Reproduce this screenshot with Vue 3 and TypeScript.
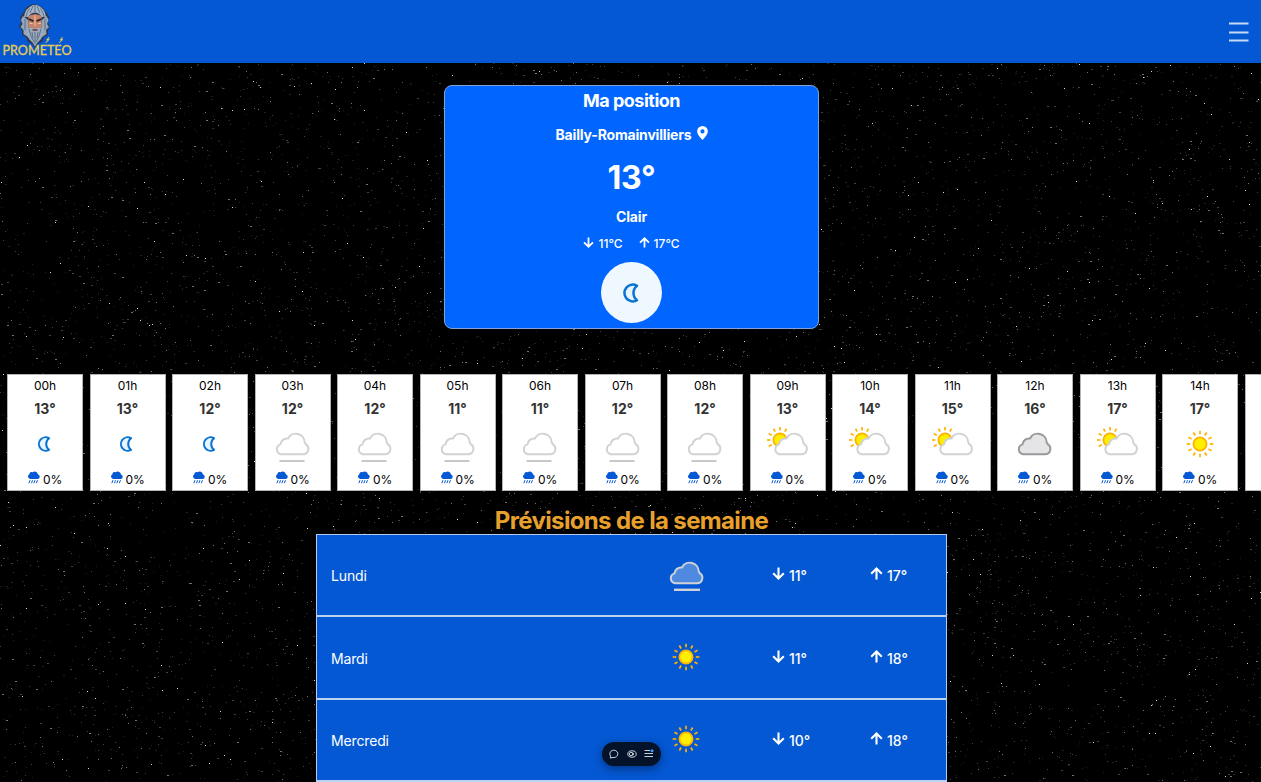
<script setup lang="ts">
type Sky = 'moon' | 'fog' | 'partly' | 'cloud' | 'sun'

interface Hour {
  label: string
  temp: number
  sky: Sky
}

interface Day {
  name: string
  low: number
  high: number
  sky: Sky
}

const hourTemps = [13, 13, 12, 12, 12, 11, 11, 12, 12, 13, 14, 15, 16, 17, 17]
const hourSkies: Sky[] = [
  'moon', 'moon', 'moon', 'fog', 'fog', 'fog', 'fog', 'fog', 'fog',
  'partly', 'partly', 'partly', 'cloud', 'partly', 'sun',
]
const hours: Hour[] = hourTemps.map((temp, i) => ({
  label: `${String(i).padStart(2, '0')}h`,
  temp,
  sky: hourSkies[i],
}))

const days: Day[] = [
  { name: 'Lundi', low: 11, high: 17, sky: 'fog' },
  { name: 'Mardi', low: 11, high: 18, sky: 'sun' },
  { name: 'Mercredi', low: 10, high: 18, sky: 'sun' },
]

const rays = Array.from({ length: 12 }, (_, i) => i * 30)
const partlyRays = [150, 180, 210, 240, 270, 300]

const cloudPath =
  'M7 28.300 H29 A5.400 5.400 0 0 0 31.600 18.200 Q31.600 17.200 30.700 16.500 A8.800 8.800 0 0 0 14 12.600 A6.400 6.400 0 0 0 6.500 18.400 A5.100 5.100 0 0 0 7 28.300 Z'
const moonPath = 'M12 2.200 A6.700 6.700 0 1 0 12 13.800 A7.400 7.400 0 0 1 12 2.200 Z'

// Deterministic star field: one path per brightness level.
let seed = 20231
function random(): number {
  seed = (seed * 1664525 + 1013904223) % 4294967296
  return seed / 4294967296
}
const starLevels = [
  { opacity: 0.13, count: 4600 },
  { opacity: 0.26, count: 3300 },
  { opacity: 0.45, count: 1500 },
  { opacity: 0.85, count: 360 },
].map(({ opacity, count }) => {
  let d = ''
  for (let i = 0; i < count; i++) {
    const x = Math.floor(random() * 1261)
    const y = Math.floor(random() * 720)
    const w = opacity < 0.8 && random() > 0.8 ? 2 : 1
    d += `M${x} ${y}h${w}v1h-${w}z`
  }
  return { opacity, d }
})
</script>

<template>
  <div class="page">
    <header class="topbar">
      <svg class="logo" width="76" height="62" viewBox="0 0 76 62">
        <path d="M34 4 Q26 5 23 13 L20 17 L21 22 L19 27 L22 30 L22 35 L26 37 L28 42 L31 43 L35 48 L39 43 L42 42 L44 37 L48 35 L48 30 L50 27 L48 22 L49.500 17 L46 12 Q42 5 34 4Z" fill="#2b3853" />
        <path d="M33 5 Q25 8 24 17 L28.500 17 Q30 13 35 12.500 Q40 13 41.500 17 L46 17 Q45 8 37 5Z" fill="#a3b3c5" />
        <path d="M23 16 L21 20 L22.500 24 L20.500 27 L23.500 30 L23.500 34 L28 37 L28 20Z M46.500 16 L48.500 20 L47 24 L49 27 L46 30 L46.500 34 L42 37 L42 20Z" fill="#95a6ba" />
        <path d="M28.500 16 Q35 12.500 41.500 16 L42 27 Q35 31 28 27Z" fill="#c4836b" />
        <path d="M28.500 19 L33.500 21.200 M41.500 19 L36.500 21.200" stroke="#2a2432" stroke-width="1.900" />
        <path d="M29.500 23.500H32.500M38 23.500H41" stroke="#f0c5a5" stroke-width="1.200" />
        <path d="M35 15 V26" stroke="#e8a283" stroke-width="1.800" />
        <path d="M27 27.500 Q31 27 35 28.500 Q39 27 43 27.500 L43.500 34 L41 39 L37.500 42.500 L35 46.500 L32.500 42.500 L29 39 L26.500 34Z" fill="#9aabbe" />
        <path d="M29 29 L31 36 L34 42 M35 32 V44 M41 29 L39 36 L36 42 M29.500 8.500 Q26.500 12 26 17 M33 6 L30 13 M35 5V12 M37 6 L40 13 M40.500 8.500 Q43.500 12 44 17 M25 19 V30 M45 19 V30 M32 32 L33 38 M38 32 L37 38" stroke="#45536e" stroke-width=".7" fill="none" />
        <path d="M32.500 30 H37.500" stroke="#6c3c40" stroke-width="1.600" />
        <path d="M49 37 L46.500 40 H48 L45.500 43 L49.500 39.500 H48Z M62.500 37 L60 40 H61.500 L59 43 L63 39.500 H61.500Z" fill="#e8d15a" stroke="#e8d15a" stroke-width=".5" />
        <text x="2.500" y="54.700" textLength="69" lengthAdjust="spacingAndGlyphs" class="logo-text">PROMETEO</text>
      </svg>
      <svg class="burger" width="20" height="20" viewBox="0 0 20 20">
        <path d="M0 1.500H19.500M0 10.500H19.500M0 18.500H19.500" stroke="#c4d9f6" stroke-width="1.900" />
      </svg>
    </header>

    <main class="sky">
      <svg class="stars" width="1261" height="719" viewBox="0 0 1261 719" shape-rendering="crispEdges">
        <path v-for="level in starLevels" :key="level.opacity" :d="level.d" fill="#fff" :fill-opacity="level.opacity" />
      </svg>

      <section class="current">
        <h1>Ma position</h1>
        <div class="place">
          <span>Bailly-Romainvilliers</span>
          <svg width="11" height="14" viewBox="0 0 11 14">
            <path fill-rule="evenodd" d="M5.500 0A5.400 5.400 0 0 0 .1 5.400C.1 8 3 11.200 5.500 14 8 11.200 10.900 8 10.900 5.400A5.400 5.400 0 0 0 5.500 0ZM5.500 3.300A2.100 2.100 0 1 1 5.500 7.500 2.100 2.100 0 0 1 5.500 3.300Z" fill="#fff" />
          </svg>
        </div>
        <div class="now">13°</div>
        <div class="condition">Clair</div>
        <div class="range">
          <svg class="arrow" width="11" height="11" viewBox="0 0 13 13"><path d="M6.500 .5V11M1.200 6.300L6.500 11.500 11.800 6.300" /></svg>
          <span>11°C</span>
          <svg class="arrow second" width="11" height="11" viewBox="0 0 13 13"><path d="M6.500 12.500V2M1.200 6.700L6.500 1.500 11.800 6.700" /></svg>
          <span>17°C</span>
        </div>
        <div class="badge">
          <svg width="17.500" height="20" viewBox="0 0 14 16"><path :d="moonPath" class="moon" /></svg>
        </div>
      </section>

      <section class="hours">
        <article v-for="hour in hours" :key="hour.label" class="hour">
          <span class="hour-label">{{ hour.label }}</span>
          <strong class="hour-temp">{{ hour.temp }}°</strong>
          <div class="hour-icon">
            <svg v-if="hour.sky === 'moon'" class="moon-icon" width="14" height="16" viewBox="0 0 14 16"><path :d="moonPath" class="moon" /></svg>
            <svg v-else-if="hour.sky === 'sun'" width="28" height="28" viewBox="-14 -14 28 28">
              <circle r="6.600" class="sun" />
              <path v-for="a in rays" :key="a" d="M9.800 0H13.300" class="ray" :transform="`rotate(${a})`" />
            </svg>
            <svg v-else-if="hour.sky === 'partly'" class="partly-icon" width="44" height="36" viewBox="0 0 44 36">
              <g transform="translate(15 14)">
                <circle r="6.600" class="sun" />
                <path v-for="a in partlyRays" :key="a" d="M9.600 0H13" class="ray" :transform="`rotate(${a})`" />
              </g>
              <path :d="cloudPath" class="cloud white" transform="translate(7.500 0)" />
            </svg>
            <svg v-else class="cloud-icon" width="38" height="36" viewBox="0 0 38 36">
              <path :d="cloudPath" class="cloud" :class="hour.sky === 'cloud' ? 'grey' : 'white'" />
              <path v-if="hour.sky === 'fog'" d="M5.500 35H30.500" class="fogline" />
            </svg>
          </div>
          <div class="rain">
            <svg width="12" height="13" viewBox="0 0 12 13">
              <path d="M2.200 8A2.500 2.500 0 0 1 1.200 3.400 2.700 2.700 0 0 1 4.600 1.300 3.400 3.400 0 0 1 10 3.400 2.400 2.400 0 0 1 10 8Z" fill="#0458d3" />
              <path d="M2 9.200L.8 12.200M4.500 9.200L3.500 12.200M7 9.200L5.800 12.200M9.500 9.200L8.300 12.200" stroke="#0458d3" stroke-width="1" />
            </svg>
            <span>0%</span>
          </div>
        </article>
        <article class="hour"></article>
      </section>

      <h2>Prévisions de la semaine</h2>

      <section class="week">
        <div v-for="day in days" :key="day.name" class="day">
          <span class="day-name">{{ day.name }}</span>
          <div class="day-icon">
            <svg v-if="day.sky === 'sun'" class="day-sun" width="28" height="28" viewBox="-14 -14 28 28">
              <circle r="6.600" class="sun" />
              <path v-for="a in rays" :key="a" d="M9.800 0H13.300" class="ray" :transform="`rotate(${a})`" />
            </svg>
            <svg v-else class="day-fog" width="38" height="36" viewBox="0 0 38 36">
              <path :d="cloudPath" class="cloud tint" />
              <path d="M6 34.800H32" class="fogline light" />
            </svg>
          </div>
          <div class="day-temp">
            <svg class="arrow" width="13" height="13" viewBox="0 0 13 13"><path d="M6.500 .5V11M1.200 6.300L6.500 11.500 11.800 6.300" /></svg>
            <span>{{ day.low }}°</span>
          </div>
          <div class="day-temp">
            <svg class="arrow" width="13" height="13" viewBox="0 0 13 13"><path d="M6.500 12.500V2M1.200 6.700L6.500 1.500 11.800 6.700" /></svg>
            <span>{{ day.high }}°</span>
          </div>
        </div>
      </section>
    </main>

    <div class="toolbar">
      <svg width="10" height="10" viewBox="0 0 10 10"><path d="M1.200 9L1.700 7.200A4 3.700 0 1 1 4 8.500Z" /></svg>
      <svg width="10" height="10" viewBox="0 0 10 10"><ellipse cx="5" cy="5" rx="4.200" ry="3.200" /><circle cx="4" cy="5" r="1.700" /><path d="M5.800 3.500Q7.300 5 5.800 6.500" /></svg>
      <svg width="10" height="10" viewBox="0 0 10 10"><path d="M.5 1.500H6M.5 4.500H9M.5 7.500H9" /><circle cx="8" cy="1.700" r="1.500" class="dot" /></svg>
    </div>
  </div>
</template>

<style>
body {
  background: #000;
  overflow: hidden;
}
</style>

<style scoped>
.page {
  position: relative;
  width: 1261px;
  height: 782px;
  overflow: hidden;
  background: #000;
  color: #fff;
  font-family: Inter, "Liberation Sans", sans-serif;
}
svg {
  display: block;
  flex: none;
}
.topbar {
  height: 63px;
  background: #0458d3;
  display: flex;
  justify-content: space-between;
}
.logo-text {
  font: 400 13.5px Lato, sans-serif;
  fill: #e6cc55;
  stroke: #e6cc55;
  stroke-width: 0.35;
}
.burger {
  margin: 22px 12px 0 0;
}
.sky {
  position: relative;
  height: 719px;
  display: flex;
  flex-direction: column;
  align-items: center;
}
.stars {
  position: absolute;
  inset: 0;
}
.current {
  position: relative;
  box-sizing: border-box;
  flex: none;
  width: 375px;
  height: 244px;
  margin: 22px 0 0 2px;
  border: 1px solid #7fa3d8;
  border-radius: 8px;
  background: #0066ff;
  display: flex;
  flex-direction: column;
  align-items: center;
}
h1 {
  margin: 4px 0 0;
  font-size: 18px;
  line-height: 22px;
  font-weight: 700;
  letter-spacing: -0.5px;
}
.place {
  margin-top: 13px;
  height: 20px;
  display: flex;
  gap: 5px;
  font-size: 14px;
  line-height: 20px;
  font-weight: 700;
  letter-spacing: -0.17px;
}
.place svg {
  margin-top: 1px;
}
.now {
  margin-top: 13px;
  font-size: 32px;
  line-height: 40px;
  font-weight: 700;
  letter-spacing: -0.3px;
}
.condition {
  margin-top: 9px;
  font-size: 14px;
  line-height: 20px;
  font-weight: 700;
  letter-spacing: -0.2px;
}
.range {
  margin-top: 8px;
  height: 18px;
  display: flex;
  gap: 4px;
  font-size: 12px;
  line-height: 18px;
  font-weight: 500;
}
.range svg {
  margin-top: 2px;
}
.range .second {
  margin-left: 12px;
}
.arrow path {
  fill: none;
  stroke: #fff;
  stroke-width: 2.1;
}
.badge {
  margin-top: 9px;
  width: 61px;
  height: 61px;
  border-radius: 50%;
  background: #f0f8ff;
  display: flex;
  align-items: center;
  justify-content: center;
}
.badge svg {
  margin-right: 2px;
}
.moon {
  fill: #e9f5fb;
  stroke: #0a74d4;
  stroke-width: 2;
  stroke-linejoin: round;
}
.hours {
  position: relative;
  flex: none;
  align-self: flex-start;
  margin: 45px 0 0 7px;
  display: flex;
  gap: 6.5px;
}
.hour {
  box-sizing: border-box;
  flex: none;
  width: 76px;
  height: 117px;
  border: 1px solid #b4b4b4;
  background: #fff;
  color: #000;
  display: flex;
  flex-direction: column;
  align-items: center;
}
.hour-label {
  margin-top: 2px;
  font-size: 12px;
  line-height: 18px;
}
.hour-temp {
  margin-top: 4px;
  font-size: 14px;
  line-height: 20px;
  color: #333;
}
.hour-icon {
  height: 46px;
  margin-top: 2px;
  display: flex;
  align-items: center;
  justify-content: center;
}
.moon-icon {
  margin-right: 3px;
}
.partly-icon {
  margin-right: 2px;
}
.sun {
  fill: #ffee00;
  stroke: #ffb300;
  stroke-width: 1.8;
}
.ray {
  stroke: #ffb300;
  stroke-width: 1.7;
}
.cloud {
  stroke-width: 2;
  stroke-linejoin: round;
}
.white {
  fill: #fff;
  stroke: #d0d2d3;
}
.grey {
  fill: #e5e5e7;
  stroke: #999;
}
.tint {
  fill: #5089e0;
  stroke: #cfd2d6;
}
.fogline {
  stroke: #c8c8c8;
  stroke-width: 2;
}
.light {
  stroke: #cfd2d6;
  stroke-width: 2.4;
}
.rain {
  margin-top: 3px;
  display: flex;
  gap: 3px;
  font-size: 12px;
  line-height: 20px;
  letter-spacing: -0.2px;
}
.rain svg {
  margin-top: 1px;
}
h2 {
  position: relative;
  flex: none;
  margin: 16px 0 0 2px;
  font-size: 24px;
  line-height: 28px;
  font-weight: 700;
  letter-spacing: -0.64px;
  color: #e8a02c;
}
.week {
  position: relative;
  box-sizing: border-box;
  width: 631px;
  height: 300px;
  flex: none;
  margin: -1px 0 0 2px;
  border: 1px solid #b4cbed;
  background: #0458d3;
}
.day {
  box-sizing: border-box;
  height: 82.4px;
  border-bottom: 2px solid #bcd2f2;
  display: grid;
  grid-template-columns: 338px 103px 98px 98px;
  align-items: center;
  padding-left: 14px;
  font-size: 14px;
  line-height: 20px;
}
.day-name {
  margin-top: 2px;
  letter-spacing: -0.15px;
}
.day-icon {
  display: flex;
  align-items: center;
  padding-left: 3px;
}
.day-sun {
  margin-top: -1px;
}
.day-fog {
  margin: -4px 0 0 -4px;
}
.day-temp {
  display: flex;
  gap: 4px;
  font-weight: 500;
}
.day-temp svg {
  margin-top: 3px;
}
.day-temp span {
  padding-top: 2px;
}
.toolbar {
  position: absolute;
  left: 602px;
  top: 742px;
  box-sizing: border-box;
  width: 59px;
  height: 24px;
  padding: 0 7px;
  border-radius: 12px;
  background: #041329;
  box-shadow: 0 3px 8px rgba(0, 10, 40, 0.45);
  display: flex;
  align-items: center;
  justify-content: space-between;
}
.toolbar svg {
  fill: none;
  stroke: #c9d0da;
  stroke-width: 1;
}
.toolbar .dot {
  fill: #3b9bff;
  stroke: none;
}
</style>
